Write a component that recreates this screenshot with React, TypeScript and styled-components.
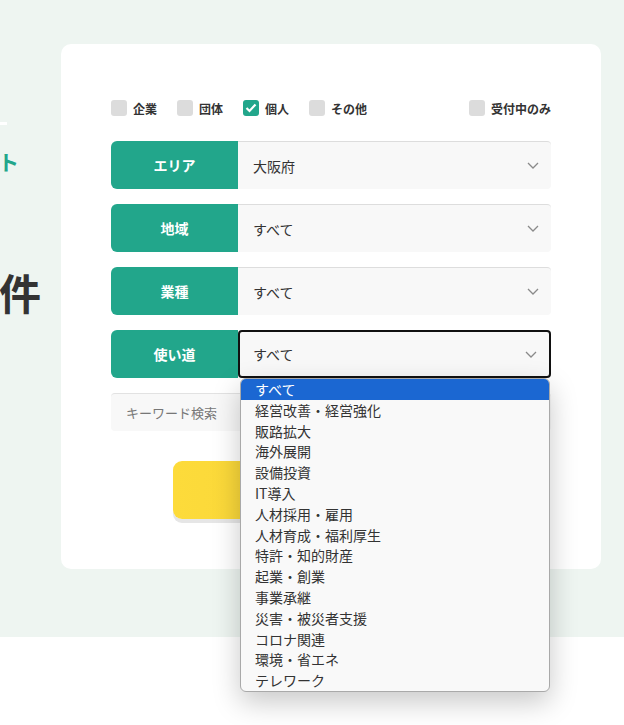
import styled, { createGlobalStyle } from 'styled-components';

const GlobalStyle = createGlobalStyle`
  body {
    margin: 0;
    background: #fff;
    font-family: "Noto Sans CJK JP", "Noto Sans", sans-serif;
    color: #333;
  }
`;

const Hero = styled.section`
  background: #eef5f1;
  height: 637px;
  padding-top: 44px;
  box-sizing: border-box;
  display: flex;
`;

const Intro = styled.div`
  width: 61px;
  flex-shrink: 0;
  overflow: hidden;
  display: flex;
  flex-direction: column;
`;

const IntroLine = styled.div<{ $top: number; $right: number }>`
  display: flex;
  justify-content: flex-end;
  margin-top: ${(p) => p.$top}px;
  padding-right: ${(p) => p.$right}px;
  white-space: nowrap;
`;

const WhiteBar = styled.div`
  width: 120px;
  height: 3px;
  background: #fff;
`;

const SubTitle = styled.span`
  color: #22a68b;
  font-size: 21px;
  font-weight: 700;
  line-height: 24px;
`;

const BigTitle = styled.span`
  color: #333;
  font-size: 42px;
  font-weight: 700;
  line-height: 48px;
`;

const Card = styled.div`
  width: 540px;
  height: 525px;
  box-sizing: border-box;
  background: #fff;
  border-radius: 10px;
  padding: 54px 50px 50px;
  display: flex;
  flex-direction: column;
`;

const CheckRow = styled.div`
  display: flex;
  align-items: center;
  height: 20px;
  gap: 20px;
  margin-bottom: 23px;
`;

const CheckItem = styled.label<{ $push?: boolean }>`
  display: flex;
  align-items: center;
  gap: 6px;
  font-size: 12px;
  font-weight: 700;
  color: #333;
  margin-left: ${(p) => (p.$push ? 'auto' : '0')};
`;

const Box = styled.span<{ $checked?: boolean }>`
  width: 16px;
  height: 16px;
  border-radius: 3px;
  background: ${(p) => (p.$checked ? '#22a68b' : '#dcdcdc')};
  display: flex;
  align-items: center;
  justify-content: center;
`;

const Fields = styled.div`
  display: flex;
  flex-direction: column;
  gap: 15px;
`;

const FieldRow = styled.div`
  display: flex;
  height: 48px;
  position: relative;
`;

const FieldLabel = styled.div`
  width: 127px;
  flex-shrink: 0;
  background: #22a68b;
  color: #fff;
  font-size: 14px;
  font-weight: 700;
  border-radius: 6px 0 0 6px;
  display: flex;
  align-items: center;
  justify-content: center;
`;

const SelectBox = styled.div<{ $focused?: boolean }>`
  flex: 1;
  background: #f8f8f8;
  box-sizing: border-box;
  border-radius: ${(p) => (p.$focused ? '4px' : '0 4px 4px 0')};
  border-top: 1px solid #dddddd;
  ${(p) => (p.$focused ? 'border: 2px solid #111;' : '')}
  padding: 0 12px 0 ${(p) => (p.$focused ? '13px' : '15px')};
  display: flex;
  align-items: center;
  justify-content: space-between;
  font-size: 14px;
  color: #333;
`;

const Keyword = styled.div`
  height: 38px;
  background: #f8f8f8;
  border-top: 1px solid #e2e2e2;
  border-radius: 4px;
  box-sizing: border-box;
  padding-left: 15px;
  display: flex;
  align-items: center;
  font-size: 13px;
  color: #777;
`;

const SearchButton = styled.button`
  margin: 30px auto 0;
  width: 316px;
  height: 58px;
  border: none;
  border-radius: 9px;
  background: linear-gradient(90deg, #fddb3a 0%, #f2d03a 100%);
  box-shadow: 0 4px 0 #e6e6e6;
  font-family: inherit;
  font-size: 16px;
  font-weight: 700;
  color: #333;
`;

const Dropdown = styled.ul`
  position: absolute;
  top: 48px;
  left: 129px;
  right: 1px;
  margin: 0;
  padding: 0;
  list-style: none;
  background: #f9f9f9;
  border: 1px solid #a9a9a9;
  border-radius: 6px;
  overflow: hidden;
  box-shadow: 0 10px 28px rgba(0, 0, 0, 0.22);
  z-index: 5;
`;

const Option = styled.li<{ $active?: boolean }>`
  height: 20.8px;
  line-height: 20.8px;
  padding-left: 14px;
  font-size: 14px;
  color: ${(p) => (p.$active ? '#fff' : '#333')};
  background: ${(p) => (p.$active ? '#1b67d2' : 'transparent')};
`;

const Rest = styled.div`
  background: #fff;
  height: 88px;
`;

function Chevron() {
  return (
    <svg width="12" height="7" viewBox="0 0 12 7">
      <path d="M1 1l5 5 5-5" fill="none" stroke="#8a8a8a" strokeWidth="1.3" />
    </svg>
  );
}

function Check() {
  return (
    <svg width="12" height="10" viewBox="0 0 12 10">
      <path d="M1.5 5l3 3 6-6.5" fill="none" stroke="#fff" strokeWidth="2.2" />
    </svg>
  );
}

const purposes = [
  'すべて',
  '経営改善・経営強化',
  '販路拡大',
  '海外展開',
  '設備投資',
  'IT導入',
  '人材採用・雇用',
  '人材育成・福利厚生',
  '特許・知的財産',
  '起業・創業',
  '事業承継',
  '災害・被災者支援',
  'コロナ関連',
  '環境・省エネ',
  'テレワーク',
];

const fields = [
  { label: 'エリア', value: '大阪府' },
  { label: '地域', value: 'すべて' },
  { label: '業種', value: 'すべて' },
];

export default function App() {
  return (
    <>
      <GlobalStyle />
      <Hero>
        <Intro>
          <IntroLine $top={78} $right={54}>
            <WhiteBar />
          </IntroLine>
          <IntroLine $top={24} $right={42}>
            <SubTitle>補助金・助成金リスト</SubTitle>
          </IntroLine>
          <IntroLine $top={95} $right={20}>
            <BigTitle>該当する件</BigTitle>
          </IntroLine>
        </Intro>
        <Card>
          <CheckRow>
            <CheckItem>
              <Box />
              企業
            </CheckItem>
            <CheckItem>
              <Box />
              団体
            </CheckItem>
            <CheckItem>
              <Box $checked>
                <Check />
              </Box>
              個人
            </CheckItem>
            <CheckItem>
              <Box />
              その他
            </CheckItem>
            <CheckItem $push>
              <Box />
              受付中のみ
            </CheckItem>
          </CheckRow>
          <Fields>
            {fields.map((f) => (
              <FieldRow key={f.label}>
                <FieldLabel>{f.label}</FieldLabel>
                <SelectBox>
                  {f.value}
                  <Chevron />
                </SelectBox>
              </FieldRow>
            ))}
            <FieldRow>
              <FieldLabel>使い道</FieldLabel>
              <SelectBox $focused>
                すべて
                <Chevron />
              </SelectBox>
              <Dropdown>
                {purposes.map((p, i) => (
                  <Option key={p} $active={i === 0}>
                    {p}
                  </Option>
                ))}
              </Dropdown>
            </FieldRow>
            <Keyword>キーワード検索</Keyword>
          </Fields>
          <SearchButton>検索</SearchButton>
        </Card>
      </Hero>
      <Rest />
    </>
  );
}
